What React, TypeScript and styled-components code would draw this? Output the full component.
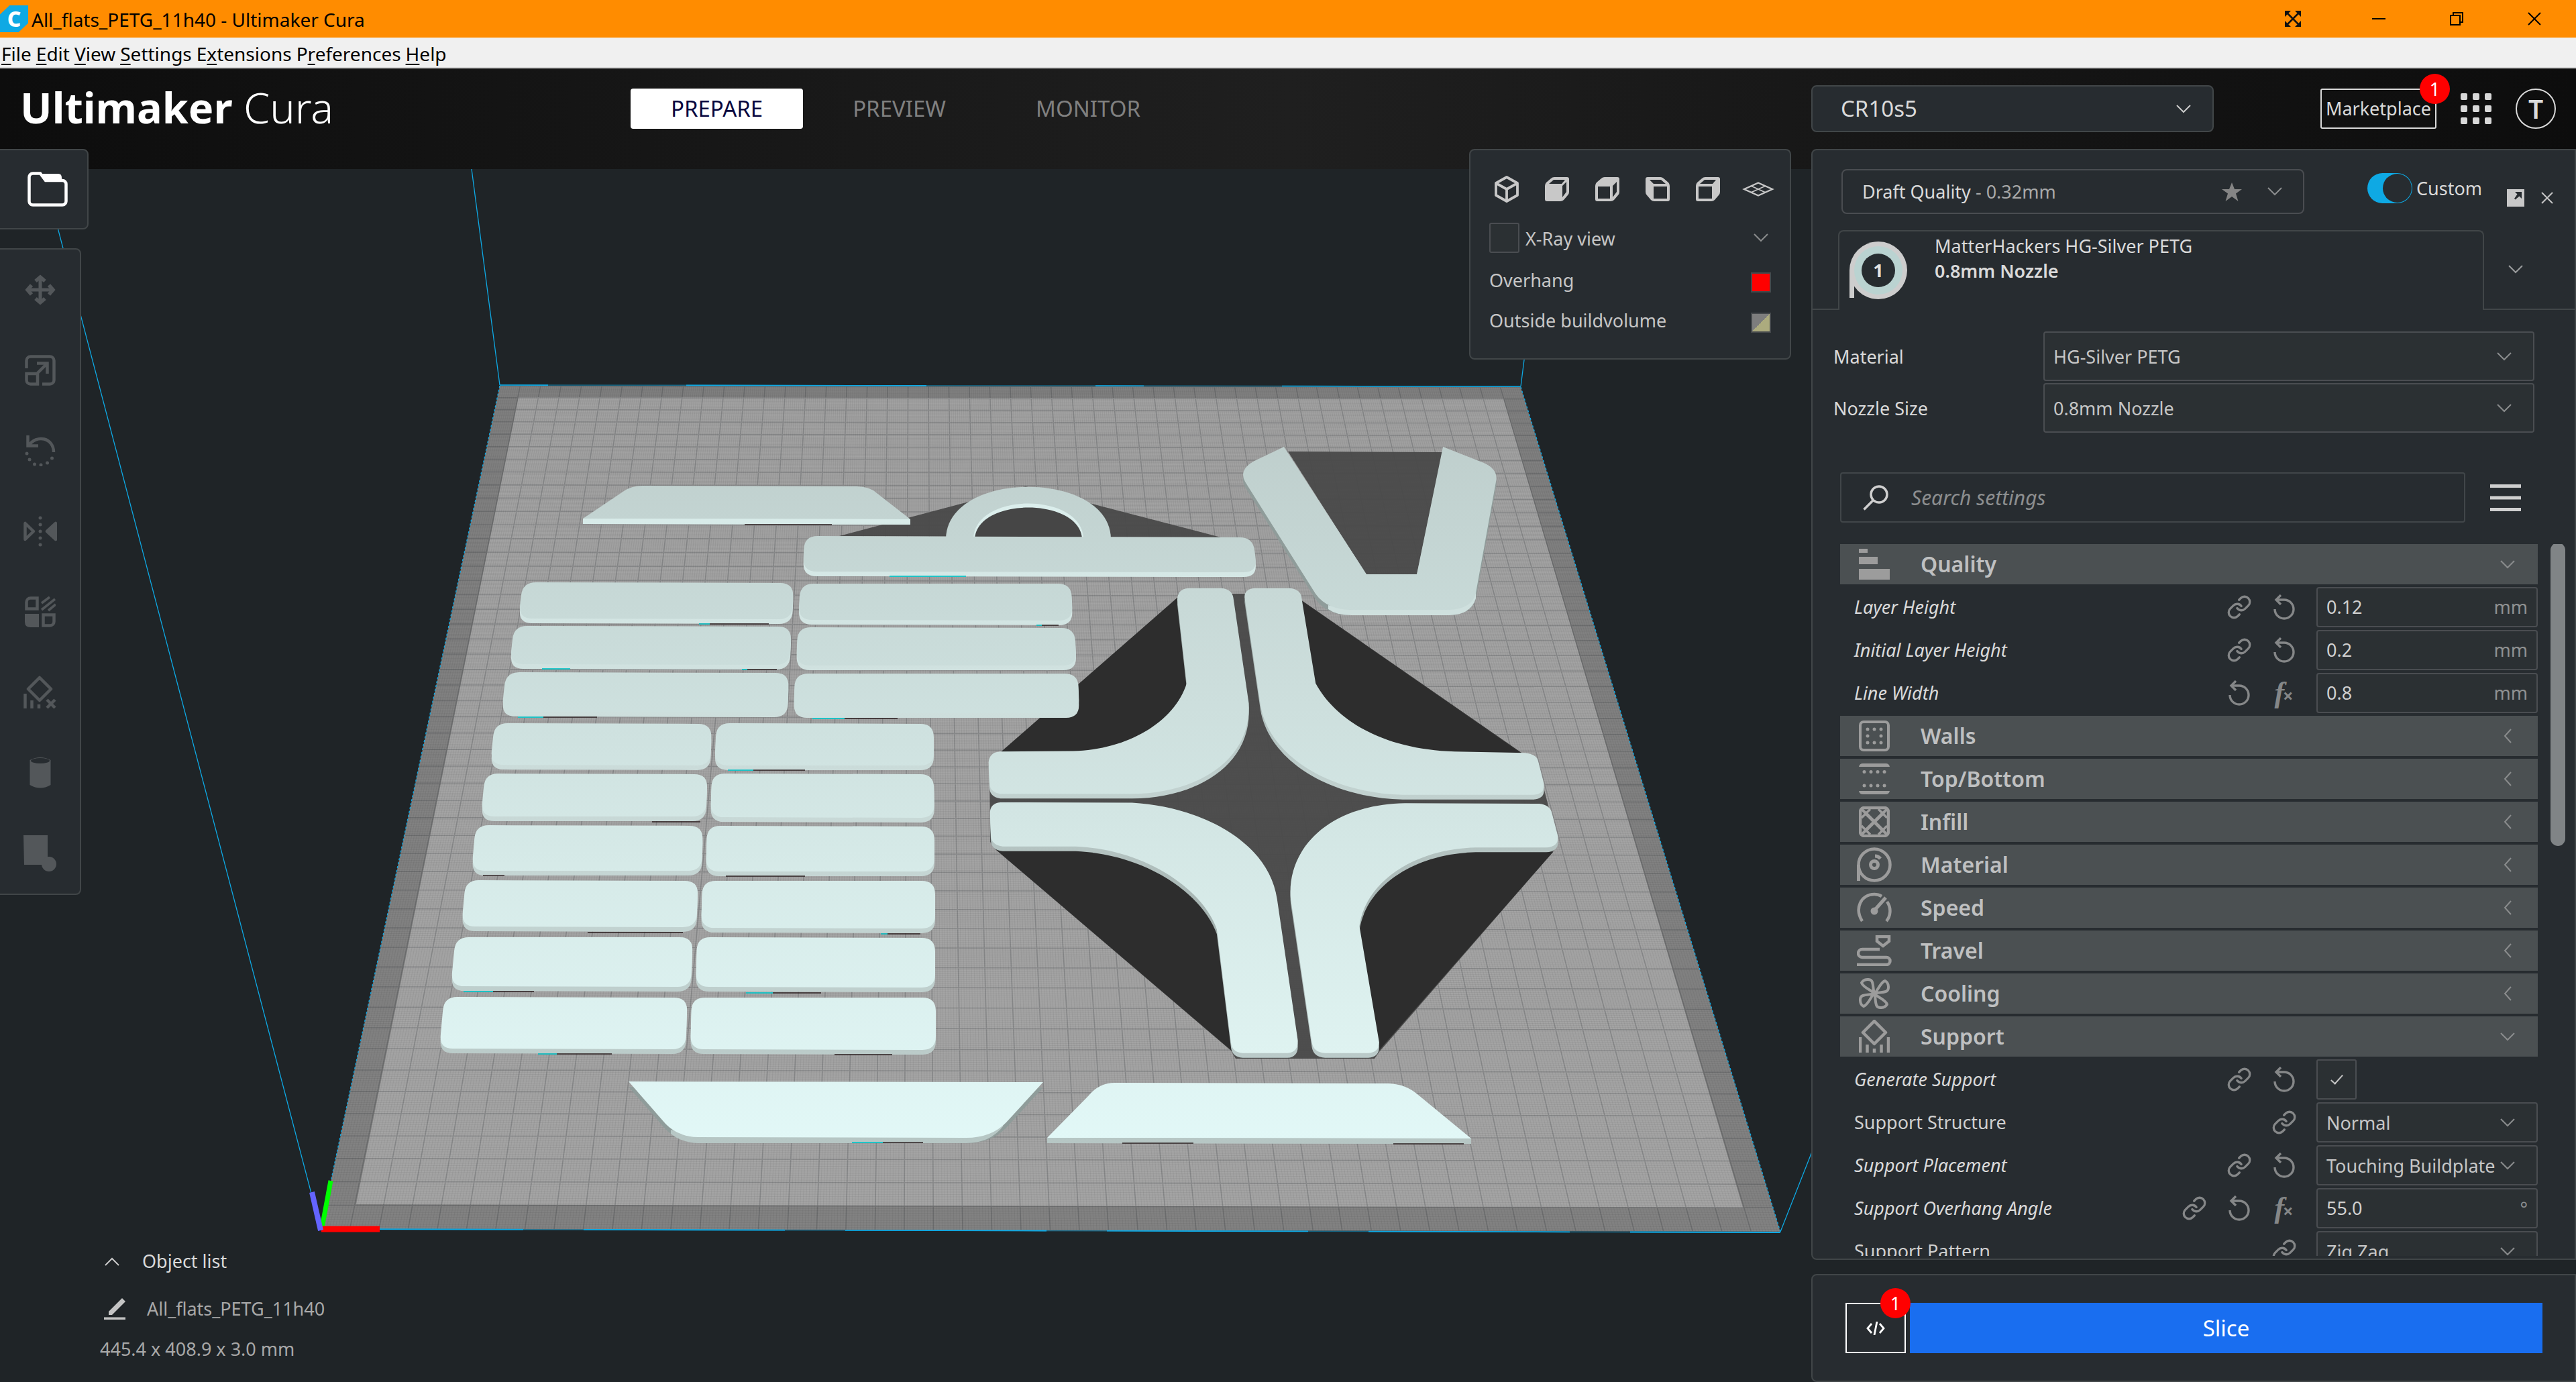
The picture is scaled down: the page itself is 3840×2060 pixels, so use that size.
import React from "react";
import styled, { createGlobalStyle, css } from "styled-components";
import { Link as LinkIcon } from "lucide-react";

const c = {
  accent: "#ff8c00",
  canvas: "#1f2427",
  panel: "#272c30",
  line: "#414648",
  field: "#2b3033",
  fieldLine: "#4a4d51",
  category: "#4b5052",
  text: "#dadada",
  soft: "#c6c6c6",
  dim: "#8f9192",
  icon: "#c8c8c8",
  blue: "#196ef0",
  cyan: "#0ea9e4",
  alert: "#ff0000",
};

const GlobalStyle = createGlobalStyle`
  *, *::before, *::after { box-sizing: border-box; }
  html, body { margin: 0; padding: 0; background: ${c.canvas}; }
  body { overflow: hidden; }
  body, button, input, select {
    font-family: "Noto Sans", "Open Sans", sans-serif;
    font-size: 27px;
    line-height: 36px;
    color: ${c.text};
  }
  button { padding: 0; border: 0; background: none; cursor: pointer; }
  svg { display: block; flex: none; }
`;

/* ---------- frame ---------- */

const Window = styled.div`
  display: flex;
  flex-direction: column;
  height: 100vh;
`;

const TitleBar = styled.header`
  display: flex;
  align-items: center;
  height: 56px;
  padding-right: 4px;
  background: ${c.accent};
  color: #000;
  font-size: 28px;
`;

const AppBadge = styled.span`
  display: grid;
  place-items: center;
  width: 42px;
  height: 40px;
  margin-right: 5px;
  background: ${c.cyan};
  clip-path: polygon(34% 0, 100% 0, 100% 66%, 66% 100%, 0 100%, 0 34%);
  color: #fff;
  font-size: 32px;
  font-weight: 800;
  line-height: 40px;
`;

const WindowTitle = styled.span`
  flex: 1;
  padding-top: 2px;
`;

const CaptionButton = styled.button<{ $gap?: boolean }>`
  display: grid;
  place-items: center;
  width: 116px;
  height: 54px;
  margin-right: ${(p) => (p.$gap ? "12px" : "0")};
`;

const MenuBar = styled.nav`
  display: flex;
  gap: 7px;
  height: 46px;
  padding: 3px 0 0 2px;
  align-items: center;
  background: #f0f0f0;
  border-bottom: 2px solid #d9d9d9;
`;

const MenuItem = styled.button`
  color: #000;
  font-size: 28px;
  u {
    text-decoration-thickness: 2px;
    text-underline-offset: 4px;
  }
`;

const Main = styled.main`
  position: relative;
  flex: 1;
  min-height: 0;
  display: flex;
  flex-direction: column;
  background: linear-gradient(90deg, #0d0d0d, #1f1f1f 50%, #0d0d0d) 0 0 / 100% 150px no-repeat, ${c.canvas};
`;

const SceneLayer = styled.svg`
  position: absolute;
  inset: 0;
  width: 100%;
  height: 100%;
`;

const columns = css`
  position: relative;
  display: grid;
  grid-template-columns: minmax(0, 45fr) minmax(0, 19fr);
`;

const Header = styled.div`
  ${columns}
  height: 120px;
`;

const HeaderStart = styled.div`
  display: grid;
  grid-template-columns: 1fr auto 1fr;
  align-items: center;
`;

const Brand = styled.h1`
  margin: 0;
  padding: 0 0 4px 30px;
  font-size: 63px;
  line-height: 72px;
  font-weight: 700;
  color: #fff;
  white-space: nowrap;
  span {
    font-weight: 300;
  }
`;

const Stages = styled.div`
  display: flex;
  gap: 14px;
`;

const StageButton = styled.button<{ $active?: boolean }>`
  height: 60px;
  padding: 0 60px;
  border-radius: 4px;
  font-size: 33px;
  background: ${(p) => (p.$active ? "#fff" : "transparent")};
  color: ${(p) => (p.$active ? "#08073f" : "#808080")};
`;

const HeaderEnd = styled.div`
  display: flex;
  align-items: center;
  gap: 36px;
  padding-right: 30px;
`;

const Badge = styled.span`
  position: absolute;
  top: -24px;
  right: -22px;
  width: 45px;
  height: 45px;
  border-radius: 50%;
  background: ${c.alert};
  color: #fff;
  font-size: 27px;
  line-height: 45px;
  text-align: center;
`;

const MarketButton = styled.button`
  position: relative;
  height: 60px;
  margin-left: auto;
  padding: 0 6px;
  border: 2px solid #dadada;
  border-radius: 3px;
`;

const Avatar = styled.button`
  width: 60px;
  height: 60px;
  border: 2px solid #dadada;
  border-radius: 50%;
  font-size: 39px;
  font-weight: 600;
`;

/* ---------- shared controls ---------- */

const SelectWrap = styled.div`
  position: relative;
  display: flex;
  min-width: 0;
  svg {
    position: absolute;
    top: calc(50% - 6px);
    right: 34px;
    pointer-events: none;
  }
`;

const SelectBox = styled.select<{ $h: number; $big?: boolean }>`
  appearance: none;
  width: 100%;
  height: ${(p) => p.$h}px;
  padding: 2px 13px 0;
  border: 2px solid ${c.fieldLine};
  border-radius: 4px;
  background: ${c.field};
  color: ${c.soft};
  ${(p) =>
    p.$big &&
    css`
      padding: 0 42px;
      border-color: ${c.line};
      border-radius: 8px;
      background: ${c.panel};
      color: ${c.text};
      font-size: 33px;
    `}
`;

const MachineSelect = styled(SelectWrap)`
  flex: 0 1 600px;
`;

const TickBox = styled.input<{ $size: number }>`
  appearance: none;
  display: grid;
  place-items: center;
  width: ${(p) => p.$size}px;
  height: ${(p) => p.$size}px;
  margin: 0;
  border: 2px solid ${c.fieldLine};
  border-radius: 3px;
  background: ${c.field};
  &:checked::before {
    content: "";
    width: 9px;
    height: 18px;
    border: solid ${c.soft};
    border-width: 0 2px 2px 0;
    transform: translateY(-2px) rotate(42deg);
  }
`;

/* ---------- workspace ---------- */

const Workspace = styled.div`
  ${columns}
  flex: 1;
  min-height: 0;
`;

const Viewport = styled.section`
  display: flex;
  justify-content: space-between;
  align-items: flex-start;
  padding-right: 30px;
  height: 100%;
`;

const ToolColumn = styled.div`
  display: flex;
  flex-direction: column;
  align-items: flex-start;
  height: 100%;
  padding-bottom: 31px;
`;

const edge = css`
  background: ${c.panel};
  border: 2px solid ${c.line};
`;

const OpenButton = styled.button`
  ${edge}
  display: grid;
  place-items: center;
  width: 134px;
  height: 120px;
  margin-left: -2px;
  padding-left: 12px;
  border-radius: 0 8px 8px 0;
`;

const ToolBar = styled.div`
  ${edge}
  width: 123px;
  margin: 28px 0 auto -2px;
  border-radius: 0 8px 8px 0;
`;

const ToolButton = styled.button`
  display: grid;
  place-items: center;
  width: 100%;
  height: 120px;
  color: #53575a;
`;

const ObjectPanel = styled.div`
  display: flex;
  flex-direction: column;
  align-items: flex-start;
  gap: 24px;
  padding-left: 149px;
  color: #a8a8a8;
`;

const ObjectToggle = styled.button`
  display: flex;
  align-items: center;
  gap: 34px;
  margin-bottom: 11px;
  padding-left: 7px;
`;

const ObjectName = styled.div`
  display: flex;
  align-items: center;
  gap: 32px;
  padding-left: 6px;
`;

const ViewPanel = styled.div`
  ${edge}
  width: 480px;
  padding: 38px 28px;
  border-radius: 8px;
  color: ${c.soft};
`;

const ViewIcons = styled.div`
  display: flex;
  margin: 0 -18px 30px -12px;
`;

const ViewIconButton = styled.button`
  flex: none;
  display: grid;
  place-items: center;
  width: 75px;
  height: 40px;
  color: ${c.icon};
`;

const XRayRow = styled.div`
  display: flex;
  align-items: center;
  gap: 9px;
  padding-right: 4px;
  margin-bottom: 29px;
  label {
    padding-top: 2px;
  }
  button {
    margin-left: auto;
  }
`;

const LegendRow = styled.div`
  display: flex;
  justify-content: space-between;
  align-items: flex-start;
  height: 30px;
  line-height: 24px;
  & + & {
    margin-top: 30px;
  }
`;

const Swatch = styled.span<{ $fill: string }>`
  width: 30px;
  height: 30px;
  border: 2px solid #45494c;
  background: ${(p) => p.$fill};
`;

/* ---------- settings panel ---------- */

const SideColumn = styled.aside`
  display: flex;
  flex-direction: column;
  gap: 21px;
  min-height: 0;
  height: 100%;
`;

const SettingsPanel = styled.section`
  ${edge}
  flex: 1;
  min-height: 0;
  display: flex;
  flex-direction: column;
  padding: 28px 0 4px;
  border-radius: 8px 0 0 8px;
`;

const ProfileRow = styled.div`
  display: flex;
  align-items: flex-start;
  height: 67px;
  padding: 0 32px 0 43px;
`;

const ProfileButton = styled.button`
  display: flex;
  align-items: center;
  width: 690px;
  height: 67px;
  padding: 0 31px 0 29px;
  border: 2px solid ${c.fieldLine};
  border-radius: 8px;
  text-align: left;
  span {
    flex: 1;
    white-space: pre;
  }
  em {
    font-style: normal;
    color: #a9a9a9;
  }
  svg + svg {
    margin-left: 38px;
  }
`;

const CustomToggle = styled.label`
  display: flex;
  align-items: center;
  gap: 6px;
  margin: 6px 37px 0 auto;
`;

const Switch = styled.input`
  appearance: none;
  width: 67px;
  height: 45px;
  margin: 0;
  padding: 1px;
  border-radius: 23px;
  background: ${c.cyan};
  &::before {
    content: "";
    display: block;
    width: 43px;
    height: 43px;
    margin-left: auto;
    border-radius: 50%;
    background: ${c.panel};
  }
`;

const PanelButton = styled.button`
  display: grid;
  place-items: center;
  height: 26px;
  margin-top: 30px;
  & + & {
    margin-left: 25px;
  }
`;

const ExtruderTabs = styled.div`
  display: flex;
  height: 119px;
  margin-top: 24px;
  &::before {
    content: "";
    width: 38px;
    border-bottom: 2px solid ${c.line};
  }
`;

const ExtruderTab = styled.button`
  flex: 1;
  display: flex;
  gap: 40px;
  padding: 3px 0 0 14px;
  border: 2px solid ${c.line};
  border-bottom: 0;
  border-radius: 8px 8px 0 0;
  text-align: left;
  line-height: 37px;
  svg {
    margin-top: 10px;
  }
  strong {
    display: block;
    font-weight: 600;
  }
`;

const TabsMore = styled.button`
  width: 135px;
  padding-left: 36px;
  border-bottom: 2px solid ${c.line};
`;

const HardwareGrid = styled.div`
  display: grid;
  grid-template-columns: 313px 1fr;
  align-items: center;
  gap: 3px 0;
  margin: 32px 60px 59px 31px;
  label {
    padding-top: 2px;
  }
`;

const SearchRow = styled.div`
  display: flex;
  align-items: center;
  gap: 37px;
  margin: 0 80px 32px 41px;
`;

const SearchField = styled.label`
  flex: 1;
  display: flex;
  align-items: center;
  gap: 34px;
  height: 75px;
  padding: 0 32px;
  border: 2px solid #414649;
  border-radius: 4px;
  input {
    flex: 1;
    border: 0;
    padding: 0;
    outline: 0;
    background: none;
    font-size: 30px;
    font-style: italic;
  }
  input::placeholder {
    color: #8c8e8f;
    opacity: 1;
  }
`;

const ListArea = styled.div`
  display: flex;
  gap: 19px;
  flex: 1;
  min-height: 0;
  margin-left: 41px;
  padding-right: 14px;
  overflow: hidden;
`;

const SettingsList = styled.div`
  flex: 1;
  display: flex;
  flex-direction: column;
  gap: 4px;
`;

const ScrollThumb = styled.div`
  width: 22px;
  height: 452px;
  margin-top: -2px;
  border-radius: 11px;
  background: #808486;
`;

const Category = styled.button`
  flex: none;
  display: flex;
  align-items: center;
  height: 60px;
  padding-right: 34px;
  background: ${c.category};
  color: #bfc0c1;
  font-size: 32px;
  font-weight: 600;
  line-height: 44px;
`;

const CategoryIcon = styled.span`
  display: grid;
  place-items: center;
  width: 102px;
  margin-right: 18px;
  color: #9c9c9c;
`;

const CategoryMark = styled.span`
  display: grid;
  place-items: center;
  width: 22px;
  margin-left: auto;
`;

const SettingRow = styled.div`
  flex: none;
  display: flex;
  align-items: center;
  height: 60px;
  padding-left: 21px;
`;

const SettingLabel = styled.label<{ $changed?: boolean }>`
  flex: 1;
  font-style: ${(p) => (p.$changed ? "italic" : "normal")};
  color: ${(p) => (p.$changed ? c.text : "#cfcfcf")};
`;

const RowAction = styled.button`
  display: grid;
  place-items: center;
  width: 67px;
  height: 60px;
  color: #858788;
`;

const Fx = styled.span`
  display: flex;
  align-items: baseline;
  font: italic 700 44px/36px "Liberation Serif", serif;
  color: #858788;
  sub {
    margin-left: -2px;
    font: 700 27px/20px "Noto Sans", sans-serif;
  }
`;

const Control = styled.div`
  width: 330px;
  margin-left: 15px;
`;

const NumberField = styled.div`
  display: flex;
  align-items: center;
  height: 60px;
  padding: 0 13px;
  border: 2px solid ${c.fieldLine};
  border-radius: 4px;
  background: ${c.field};
  color: ${c.dim};
  input {
    flex: 1;
    min-width: 0;
    padding: 0;
    border: 0;
    outline: 0;
    background: none;
    color: #d0d0d0;
  }
`;

const ActionPanel = styled.section`
  ${edge}
  display: flex;
  gap: 6px;
  padding: 41px 48px 41px 49px;
  border-radius: 8px 0 0 8px;
`;

const ScriptButton = styled.button`
  position: relative;
  display: grid;
  place-items: center;
  width: 90px;
  height: 75px;
  border: 2px solid #fff;
  & > ${Badge} {
    right: -9px;
  }
`;

const SliceButton = styled.button`
  flex: 1;
  height: 75px;
  background: ${c.blue};
  color: #fff;
  font-size: 33px;
`;

/* ---------- icons ---------- */

const Chevron = ({ dir = "down", color = "#8a8c8d" }: { dir?: "down" | "up" | "left"; color?: string }) =>
  dir === "left" ? (
    <svg width="12" height="22" viewBox="0 0 12 22" fill="none" stroke={color} strokeWidth="2">
      <path d="M11 1L2 11l9 10" />
    </svg>
  ) : (
    <svg width="22" height="13" viewBox="0 0 22 13" fill="none" stroke={color} strokeWidth="2">
      <path d={dir === "down" ? "M1 1l10 10L21 1" : "M1 12L11 2l10 10"} />
    </svg>
  );

const ResetIcon = () => (
  <svg width="34" height="38" viewBox="0 0 34 38" fill="none" stroke="currentColor" strokeWidth="3.4">
    <path d="M3 22a14 14 0 1 0 14-14H6" />
    <path d="M12 1L5 8l7 7" />
  </svg>
);

const rightShell = "M0 13Q0 10 2 8L9 2Q11 0 14 0H33Q36 0 36 3V22Q36 25 34 27L28 34Q26 36 23 36H3Q0 36 0 33Z";
const leftShell = "M36 13Q36 10 34 8L27 2Q25 0 22 0H3Q0 0 0 3V22Q0 25 2 27L8 34Q10 36 13 36H33Q36 36 36 33Z";
const topHole = "M6 10L13 4H30L25 10Z";
const sideHole = "M26 13L32 7V22L26 30Z";

const Cube = ({ d }: { d: string }) => (
  <svg width="36" height="36" viewBox="0 0 36 36" fill="currentColor" fillRule="evenodd">
    <path d={d} />
  </svg>
);

const viewIcons: [string, React.ReactNode][] = [
  [
    "3D view",
    <svg width="36" height="40" viewBox="0 0 36 40" fill="none" stroke="currentColor" strokeWidth="3.8" strokeLinejoin="round">
      <path d="M18 2L34 11V29L18 38L2 29V11ZM2 11L18 20L34 11M18 20V38" />
    </svg>,
  ],
  ["Front view", <Cube d={rightShell + topHole + sideHole} />],
  ["Top view", <Cube d={rightShell + sideHole + "M4 14H22V32H4Z"} />],
  ["Left view", <Cube d={leftShell + "M6 4H23L30 10H12Z M12 14H32V32H12Z"} />],
  ["Right view", <Cube d={rightShell + topHole + "M4 14H24V32H4Z"} />],
  [
    "Perspective",
    <svg width="48" height="22" viewBox="0 0 48 22" fill="none" stroke="currentColor" strokeWidth="2.4">
      <path d="M24 1.5L45 11L24 20.5L3 11Z" />
      <path d="M13.5 6.2L34.5 15.8M34.5 6.2L13.5 15.8" strokeWidth="1.8" />
    </svg>,
  ],
];

const Glyph = ({ children, w = 46, h = 46 }: { children: React.ReactNode; w?: number; h?: number }) => (
  <svg width={w} height={h} viewBox={`0 0 ${w} ${h}`} fill="none" stroke="currentColor" strokeWidth="4.5">
    {children}
  </svg>
);

const dots = (pts: number[][], r = 2.5) =>
  pts.map(([x, y]) => <circle key={`${x}-${y}`} cx={x} cy={y} r={r} fill="currentColor" stroke="none" />);

const tools: [string, React.ReactNode][] = [
  [
    "Move",
    <Glyph>
      <path d="M23 4V42M4 23H42" strokeWidth="5" />
      <path d="M16 10L23 4L30 10M16 36L23 42L30 36M10 16L4 23L10 30M36 16L42 23L36 30" strokeWidth="5.5" />
    </Glyph>,
  ],
  [
    "Scale",
    <Glyph>
      <path d="M2.500 20V8.500a6 6 0 0 1 6-6H37.500a6 6 0 0 1 6 6V37.500a6 6 0 0 1-6 6H26" />
      <path d="M2.500 28H19V43.500H8.500a6 6 0 0 1-6-6ZM18 28L33 13M18 12.500H33.500V28" />
    </Glyph>,
  ],
  [
    "Rotate",
    <Glyph>
      <path d="M5 16C18-3 43 4 43 25M4.500 0V15.500H20" />
      {dots([[3, 27], [7, 36], [14.5, 43], [24, 44], [33.5, 41], [40.5, 34]])}
    </Glyph>,
  ],
  [
    "Mirror",
    <Glyph w={50}>
      <path d="M2.500 11V35L15 23Z" strokeLinejoin="round" />
      <path d="M48 11V35L35 23Z" fill="currentColor" strokeLinejoin="round" />
      {dots([[25, 3], [25, 13], [25, 23], [25, 33], [25, 43]])}
    </Glyph>,
  ],
  [
    "Per model settings",
    <Glyph>
      <path d="M2.500 18.500V8.500a6 6 0 0 1 6-6H18.500V18.500ZM27.500 27.500H43.500V37.500a6 6 0 0 1-6 6H27.500Z" />
      <path d="M0 26H21V46H8Q0 46 0 38Z" fill="currentColor" stroke="none" />
      <path d="M25 10L37 1M25 20L45 4M35 21L46 12" strokeWidth="3.6" />
    </Glyph>,
  ],
  [
    "Support blocker",
    <Glyph w={50} h={50}>
      <path d="M24 3L41 20L24 37L7 20Z" strokeLinejoin="round" />
      <path d="M2.500 27V49M12.500 37V49M23 43V49" />
      <path d="M35 36L47 48M47 36L35 48" />
    </Glyph>,
  ],
  [
    "Cylinder",
    <Glyph w={32}>
      <path d="M0.500 4Q16-4 31.500 4V41Q16 50 0.500 41Z" fill="currentColor" stroke="none" />
      <ellipse cx="16" cy="5" rx="14" ry="4" fill={c.panel} stroke="none" />
    </Glyph>,
  ],
  [
    "Custom shape",
    <Glyph w={50} h={54}>
      <path d="M0 0H36V44H1Z" fill="currentColor" stroke="none" />
      <circle cx="38" cy="43" r="11" fill="currentColor" stroke="none" />
    </Glyph>,
  ],
];

const icons = {
  quality: (
    <Glyph>
      <path d="M0 0H13V6H0ZM0 12H28V23H0ZM0 30H46V46H0Z" fill="currentColor" stroke="none" />
    </Glyph>
  ),
  walls: (
    <Glyph>
      <rect x="2" y="2" width="42" height="42" rx="5" strokeWidth="4" />
      {dots([[13, 13], [23, 13], [33, 13], [13, 23], [33, 23], [13, 33], [23, 33], [33, 33]])}
    </Glyph>
  ),
  topBottom: (
    <Glyph>
      <path d="M0 5Q1 0 6 0H40Q45 0 46 5ZM0 41Q1 46 6 46H40Q45 46 46 41Z" fill="currentColor" stroke="none" />
      {dots([[8, 12.5], [18, 12.5], [28, 12.5], [38, 12.5], [8, 33], [18, 33], [28, 33], [38, 33]])}
    </Glyph>
  ),
  infill: (
    <Glyph>
      <rect x="2" y="2" width="42" height="42" rx="6" strokeWidth="4.5" />
      <path d="M9 9L37 37M37 9L9 37" strokeWidth="5" />
      <path d="M17 4L4 17M29 4L42 17M4 29L17 42M42 29L29 42" strokeWidth="3.4" />
      <path d="M4 4L13 13M42 4L33 13M4 42L13 33M42 42L33 33" strokeWidth="4" />
    </Glyph>
  ),
  material: (
    <Glyph w={52} h={52}>
      <circle cx="26" cy="26" r="23.500" strokeWidth="4.500" />
      <path d="M2.500 26V50" strokeWidth="5" />
      <circle cx="26" cy="26" r="5.500" strokeWidth="5" />
      <path d="M27 13Q32 13 35 17" strokeWidth="5" />
    </Glyph>
  ),
  speed: (
    <Glyph w={52} h={46}>
      <path d="M8 43C-4 24 6 3 26 3Q32 3 37 6M45 14C52 24 50 36 44 43" strokeWidth="4.500" />
      <path d="M27 26L43 8" strokeWidth="5" />
      <circle cx="26" cy="28" r="5.500" fill="currentColor" stroke="none" />
    </Glyph>
  ),
  travel: (
    <Glyph w={52} h={46}>
      <path d="M30 2H48V9L39 16L30 9Z" strokeWidth="4.500" />
      <path d="M34 21H8a6 6 0 0 0 0 12H44a5.500 5.500 0 0 1 0 11H0" strokeWidth="4.500" />
    </Glyph>
  ),
  cooling: (
    <Glyph>
      {[0, 90, 180, 270].map((turn) => (
        <path
          key={turn}
          d="M23 23C21 19 6 14 4 7C7 1 18 0 20 6C22 12 21 18 23 23Z"
          strokeWidth="4"
          strokeLinejoin="round"
          transform={`rotate(${turn} 23 23)`}
        />
      ))}
    </Glyph>
  ),
  support: (
    <Glyph w={46} h={50}>
      <path d="M23 2L40 19L23 36L6 19Z" strokeWidth="4.500" strokeLinejoin="round" />
      <path d="M2 26V49M12.500 37V49M23 43V49M33.500 37V49M44 26V49" strokeWidth="4.500" />
    </Glyph>
  ),
};

/* ---------- build plate scene ---------- */

type Pt = [number, number];
const plate: Pt[] = [[745, 575], [2267, 577], [2654, 1836], [478, 1832]];

function projector([p0, p1, p2, p3]: Pt[]) {
  const sx = p0[0] - p1[0] + p2[0] - p3[0];
  const sy = p0[1] - p1[1] + p2[1] - p3[1];
  const dx1 = p1[0] - p2[0], dx2 = p3[0] - p2[0];
  const dy1 = p1[1] - p2[1], dy2 = p3[1] - p2[1];
  const det = dx1 * dy2 - dx2 * dy1;
  const g = (sx * dy2 - dx2 * sy) / det;
  const h = (dx1 * sy - sx * dy1) / det;
  const a = p1[0] - p0[0] + g * p1[0], b = p3[0] - p0[0] + h * p3[0];
  const d = p1[1] - p0[1] + g * p1[1], e = p3[1] - p0[1] + h * p3[1];
  return (u: number, v: number): Pt => {
    const w = g * u + h * v + 1;
    return [(a * u + b * v + p0[0]) / w, (d * u + e * v + p0[1]) / w];
  };
}

const project = projector(plate);

function gridPath(cells: number, skip: number) {
  let out = "";
  for (let i = 0; i <= cells; i++) {
    if (skip && i % skip === 0) continue;
    const t = i / cells;
    const seg = [project(t, 0), project(t, 1), project(0, t), project(1, t)].map((p) => p.map((n) => n.toFixed(1)).join(" "));
    out += `M${seg[0]}L${seg[1]}M${seg[2]}L${seg[3]}`;
  }
  return out;
}

const majorGrid = gridPath(50, 0);
const minorGrid = gridPath(500, 10);

function rounded(pts: Pt[], r: number) {
  return (
    pts
      .map((p, i) => {
        const prev = pts[(i + pts.length - 1) % pts.length];
        const next = pts[(i + 1) % pts.length];
        const toward = (q: Pt) => {
          const len = Math.hypot(q[0] - p[0], q[1] - p[1]);
          return `${(p[0] + ((q[0] - p[0]) * r) / len).toFixed(1)} ${(p[1] + ((q[1] - p[1]) * r) / len).toFixed(1)}`;
        };
        return `${i ? "L" : "M"}${toward(prev)}Q${p[0]} ${p[1]} ${toward(next)}`;
      })
      .join("") + "Z"
  );
}

const slabs: Pt[][] = [
  [[779, 868], [1183, 869], [1181, 923], [773, 922]],
  [[1193, 870], [1597, 870], [1599, 925], [1190, 924]],
  [[766, 933], [1180, 934], [1177, 991], [760, 990]],
  [[1189, 935], [1602, 936], [1605, 992], [1187, 992]],
  [[754, 1002], [1176, 1003], [1174, 1062], [748, 1061]],
  [[1185, 1004], [1607, 1004], [1609, 1063], [1183, 1063]],
  [[737, 1078], [1061, 1079], [1059, 1141], [731, 1140]],
  [[1068, 1078], [1392, 1079], [1392, 1141], [1065, 1141]],
  [[723, 1153], [1055, 1154], [1052, 1217], [717, 1217]],
  [[1061, 1153], [1392, 1154], [1393, 1219], [1059, 1218]],
  [[709, 1230], [1048, 1231], [1046, 1298], [703, 1298]],
  [[1054, 1231], [1393, 1232], [1393, 1299], [1052, 1299]],
  [[694, 1312], [1041, 1313], [1038, 1382], [688, 1381]],
  [[1047, 1313], [1394, 1313], [1394, 1384], [1045, 1383]],
  [[679, 1397], [1033, 1397], [1030, 1471], [672, 1470]],
  [[1039, 1397], [1394, 1398], [1394, 1472], [1037, 1471]],
  [[662, 1486], [1025, 1487], [1022, 1564], [655, 1563]],
  [[1031, 1487], [1395, 1487], [1395, 1565], [1029, 1564]],
  [[1199, 799], [1868, 801], [1874, 853], [1197, 852]],
];

const plainParts = [
  "M869 773L930 732Q942 724 958 724L1277 725Q1296 725 1307 735L1357 774Z",
  "M937 1612L1555 1613L1500 1673Q1478 1696 1440 1696L1040 1695Q1010 1694 992 1675Z",
  "M1561 1696L1622 1634Q1638 1614 1662 1614L2070 1615Q2096 1616 2114 1632L2193 1697Z",
  "M1914 666L1870 687Q1846 700 1856 718L1961 885Q1978 909 2015 909L2160 909Q2194 908 2200 884L2230 718Q2234 700 2212 690L2151 666L2112 856L2037 856Z",
];

/* Curved brackets share one local frame, scaled into the scene. */
const brackets = [
  "M530 480L600 480Q622 482 625 500L658 725C664 850 540 917 410 917L130 917Q108 914 107 895L105 850Q107 828 130 827L285 826C400 823 500 765 526 682L506 505Q506 482 530 480Z",
  "M670 480L745 480Q768 482 770 500L800 682C845 765 950 823 1095 827L1245 830Q1270 833 1273 848L1285 895Q1288 918 1262 919L985 919C820 915 700 830 683 730L649 500Q648 482 670 480Z",
  "M130 935L410 936C560 945 700 1020 718 1140L762 1440Q764 1466 740 1468L645 1468Q622 1466 620 1445L590 1205C560 1120 440 1035 290 1029L135 1029Q112 1026 110 1008L108 958Q108 937 130 935Z",
  "M990 937L1275 938Q1298 940 1302 958L1315 1008Q1316 1030 1290 1031L1140 1031C1000 1035 905 1110 893 1198L935 1445Q935 1466 912 1468L820 1468Q795 1466 792 1445L747 1140C738 1040 820 940 990 937Z",
];
const bracketFrame = "translate(1400 540) scale(0.7015)";

const contactMarks: [number, number, number, number][] = [
  [1042, 930, 1146, 16], [1110, 782, 1240, 0], [1326, 859, 1440, 114],
  [1545, 932, 1578, 8], [808, 997, 850, 42], [1106, 998, 1158, 8],
  [772, 1069, 890, 38], [1211, 1071, 1338, 48], [1085, 1148, 1200, 38],
  [972, 1225, 1044, 0], [720, 1305, 752, 0], [1082, 1306, 1200, 0],
  [876, 1390, 1018, 0], [1313, 1392, 1372, 10], [691, 1478, 796, 44],
  [1112, 1480, 1224, 40], [802, 1571, 912, 28], [1244, 1572, 1330, 0],
  [1270, 1703, 1376, 46], [1673, 1704, 1779, 0], [2077, 1705, 2182, 0],
];

const points = (pts: Pt[]) => pts.map((p) => p.join(",")).join(" ");

const Scene = () => (
  <SceneLayer viewBox="0 102 3840 1958" preserveAspectRatio="xMidYMid slice" role="img" aria-label="Build plate">
    <defs>
      <linearGradient id="top" gradientUnits="userSpaceOnUse" x1="0" y1="660" x2="0" y2="1710">
        <stop offset="0" stopColor="#bfcfcd" />
        <stop offset="0.25" stopColor="#c8dad8" />
        <stop offset="0.6" stopColor="#d6eae8" />
        <stop offset="1" stopColor="#e2f8f7" />
      </linearGradient>
      <linearGradient id="side" gradientUnits="userSpaceOnUse" x1="0" y1="660" x2="0" y2="1710">
        <stop offset="0" stopColor="#dcf0ee" />
        <stop offset="0.35" stopColor="#cfe0de" />
        <stop offset="1" stopColor="#b6c6c4" />
      </linearGradient>
      <linearGradient id="bracketTop" gradientUnits="userSpaceOnUse" x1="0" y1="480" x2="0" y2="1480">
        <stop offset="0" stopColor="#c7d8d6" />
        <stop offset="0.5" stopColor="#d3e6e4" />
        <stop offset="1" stopColor="#dff3f1" />
      </linearGradient>
      <linearGradient id="bracketSide" gradientUnits="userSpaceOnUse" x1="0" y1="480" x2="0" y2="1480">
        <stop offset="0" stopColor="#97a5a3" />
        <stop offset="0.42" stopColor="#c2d2d0" />
        <stop offset="0.7" stopColor="#a3b1af" />
        <stop offset="1" stopColor="#bccccb" />
      </linearGradient>
    </defs>

    <g stroke={c.cyan} strokeWidth="1.300" fill="none">
      <path d="M703 252L745 574M2308 252L2267 576M63 252L478 1832M3000 960L2654 1836" />
    </g>

    <polygon points={points(plate)} fill="#828282" />
    <polygon points="773,592 2241,594 2598,1800 531,1795" fill="#a4a4a4" />
    <path d={minorGrid} stroke="#000" strokeOpacity="0.055" strokeWidth="1" fill="none" />
    <path d={majorGrid} stroke="#1c2024" strokeOpacity="0.22" strokeWidth="1.600" fill="none" />

    <g fill="none" stroke={c.cyan}>
      <path d="M745 574L2267 576M480 1832L2654 1837" strokeWidth="1.500" strokeOpacity="0.500" />
      <path d="M745 574L2267 576" strokeWidth="1.600" strokeDasharray="72 206 358 252" />
      <path d="M480 1832L2654 1837" strokeWidth="1.800" strokeDasharray="300 90" />
      <path d="M745 575L478 1832M2267 577L2654 1836" strokeWidth="1.400" strokeDasharray="3 3" />
    </g>

    <path d="M1251 799L1440 749L1529 725L1624 750L1820 801Z" fill="#484848" fillOpacity="0.940" />
    <path d="M1920 673L2150 674L2112 857L2037 857Z" fill="#484848" fillOpacity="0.940" />
    <polygon
      points="1493,1120 1755,891 1825,885 1925,885 1941,896 2266,1122 2300,1170 2322,1255 2315,1270 2056,1568 2049,1578 1842,1578 1835,1566 1484,1266 1476,1255 1475,1136"
      fill="#484848"
      fillOpacity="0.940"
    />
    <g fill="#2a2a2a" fillOpacity="0.900">
      <path d="M1493 1120L1755 891L1778 1020Q1740 1110 1600 1128Z" />
      <path d="M1939 894L2268 1122L2160 1130Q2010 1110 1952 1020Z" />
      <path d="M1484 1266L1600 1255Q1760 1280 1822 1385L1838 1568Z" />
      <path d="M2315 1270L2200 1255Q2050 1280 2020 1380L2052 1570Z" />
    </g>

    <path d="M1410 803C1412 700 1654 700 1656 803Z" fill="url(#top)" />
    <path d="M1451 803C1453 733 1613 733 1615 803Z" fill="#dbeeec" />
    <path d="M1453 803C1457 741 1609 741 1613 803Z" fill="#464646" />

    {slabs.map((s, i) => (
      <g key={i}>
        <path d={rounded(s.map(([x, y]) => [x, y + 7] as Pt), 20)} fill="url(#side)" />
        <path d={rounded(s, 20)} fill="url(#top)" />
      </g>
    ))}

    {plainParts.map((d, i) => (
      <g key={i}>
        <path d={d} fill={i === 1 || i === 3 ? "#8f9c9a" : "url(#side)"} transform="translate(0 8)" />
        {i === 1 && <path d="M1000 1684L1040 1695H1440L1496 1678Q1476 1704 1440 1704H1040Q1016 1703 1000 1690Z" fill="url(#side)" />}
        {i === 3 && <path d="M1980 902L2015 909H2160L2200 884V892Q2192 917 2160 917H2015Q1992 917 1980 908Z" fill="#cfe0de" />}
        <path d={d} fill="url(#top)" />
      </g>
    ))}
    <path d="M869 773L1357 774V782L869 781ZM1561 1696L2193 1697V1705L1561 1704Z" fill="url(#side)" />

    <g transform={bracketFrame}>
      {brackets.map((d, i) => (
        <g key={i}>
          <path d={d} fill="url(#bracketSide)" transform="translate(0 10)" />
          <path d={d} fill="url(#bracketTop)" />
        </g>
      ))}
    </g>

    {contactMarks.map(([x1, y, x2, cyan]) => (
      <g key={`${x1}-${y}`} strokeWidth="1.400">
        <path d={`M${x1} ${y}H${x2}`} stroke="#2b1f20" />
        {cyan > 0 && <path d={`M${x1} ${y}h${cyan}`} stroke="#11eef2" />}
      </g>
    ))}

    <path d="M480 1830L493 1760" stroke="#00ff00" strokeWidth="7" />
    <path d="M479 1832H566" stroke="#ff0000" strokeWidth="9" />
    <path d="M478 1834L465 1777" stroke="#6464ff" strokeWidth="8" />
  </SceneLayer>
);

/* ---------- content ---------- */

const menus: [string, string, string][] = [
  ["", "F", "ile"],
  ["", "E", "dit"],
  ["", "V", "iew"],
  ["", "S", "ettings"],
  ["E", "x", "tensions"],
  ["P", "r", "eferences"],
  ["", "H", "elp"],
];

type Mark = "link" | "reset" | "fx";
type SettingData = {
  name: string;
  marks: Mark[];
  changed?: boolean;
  value?: string;
  unit?: string;
  option?: string;
  tick?: boolean;
};

const groups: { title: string; icon: React.ReactNode; settings?: SettingData[] }[] = [
  {
    title: "Quality",
    icon: icons.quality,
    settings: [
      { name: "Layer Height", marks: ["link", "reset"], changed: true, value: "0.12", unit: "mm" },
      { name: "Initial Layer Height", marks: ["link", "reset"], changed: true, value: "0.2", unit: "mm" },
      { name: "Line Width", marks: ["reset", "fx"], changed: true, value: "0.8", unit: "mm" },
    ],
  },
  { title: "Walls", icon: icons.walls },
  { title: "Top/Bottom", icon: icons.topBottom },
  { title: "Infill", icon: icons.infill },
  { title: "Material", icon: icons.material },
  { title: "Speed", icon: icons.speed },
  { title: "Travel", icon: icons.travel },
  { title: "Cooling", icon: icons.cooling },
  {
    title: "Support",
    icon: icons.support,
    settings: [
      { name: "Generate Support", marks: ["link", "reset"], changed: true, tick: true },
      { name: "Support Structure", marks: ["link"], option: "Normal" },
      { name: "Support Placement", marks: ["link", "reset"], changed: true, option: "Touching Buildplate" },
      { name: "Support Overhang Angle", marks: ["link", "reset", "fx"], changed: true, value: "55.0", unit: "°" },
      { name: "Support Pattern", marks: ["link"], option: "Zig Zag" },
    ],
  },
];

const markTitle = { link: "Linked to all extruders", reset: "Restore profile value", fx: "Restore calculated value" };

const MarkIcon = ({ kind }: { kind: Mark }) => {
  if (kind === "link") return <LinkIcon size={38} strokeWidth={2.1} />;
  if (kind === "reset") return <ResetIcon />;
  return (
    <Fx>
      f<sub>×</sub>
    </Fx>
  );
};

const Setting = ({ s }: { s: SettingData }) => {
  const id = s.name.toLowerCase().replace(/ /g, "-");
  return (
    <SettingRow>
      <SettingLabel htmlFor={id} $changed={s.changed}>
        {s.name}
      </SettingLabel>
      {s.marks.map((m) => (
        <RowAction key={m} aria-label={markTitle[m]}>
          <MarkIcon kind={m} />
        </RowAction>
      ))}
      <Control>
        {s.tick && <TickBox id={id} type="checkbox" $size={60} defaultChecked />}
        {s.option && (
          <SelectWrap>
            <SelectBox id={id} $h={60}>
              <option>{s.option}</option>
            </SelectBox>
            <Chevron />
          </SelectWrap>
        )}
        {s.value && (
          <NumberField>
            <input id={id} defaultValue={s.value} />
            {s.unit}
          </NumberField>
        )}
      </Control>
    </SettingRow>
  );
};

export default function App() {
  return (
    <Window>
      <GlobalStyle />
      <TitleBar>
        <AppBadge aria-hidden>C</AppBadge>
        <WindowTitle>All_flats_PETG_11h40 - Ultimaker Cura</WindowTitle>
        <CaptionButton $gap aria-label="Full screen">
          <svg width="26" height="26" viewBox="0 0 26 26" stroke="#111" strokeWidth="2.500">
            <path d="M4 4L22 22M22 4L4 22" />
            <path d="M1 1H10L1 10ZM25 1V10L16 1ZM1 25V16L10 25ZM25 25H16L25 16Z" fill="#111" stroke="none" />
          </svg>
        </CaptionButton>
        <CaptionButton aria-label="Minimize">
          <svg width="20" height="2" viewBox="0 0 20 2">
            <path d="M0 1H20" stroke="#000" strokeWidth="2" />
          </svg>
        </CaptionButton>
        <CaptionButton aria-label="Restore">
          <svg width="20" height="20" viewBox="0 0 20 20" fill="none" stroke="#000" strokeWidth="2">
            <path d="M1 5H15V19H1ZM5 5V1H19V15H15" />
          </svg>
        </CaptionButton>
        <CaptionButton aria-label="Close">
          <svg width="20" height="20" viewBox="0 0 20 20" stroke="#000" strokeWidth="2">
            <path d="M1 1L19 19M19 1L1 19" />
          </svg>
        </CaptionButton>
      </TitleBar>

      <MenuBar>
        {menus.map(([before, key, after]) => (
          <MenuItem key={before + key + after}>
            {before}
            <u>{key}</u>
            {after}
          </MenuItem>
        ))}
      </MenuBar>

      <Main>
        <Scene />
        <Header>
          <HeaderStart>
            <Brand>
              Ultimaker <span>Cura</span>
            </Brand>
            <Stages>
              <StageButton $active>PREPARE</StageButton>
              <StageButton>PREVIEW</StageButton>
              <StageButton>MONITOR</StageButton>
            </Stages>
          </HeaderStart>
          <HeaderEnd>
            <MachineSelect>
              <SelectBox $h={70} $big aria-label="Printer">
                <option>CR10s5</option>
              </SelectBox>
              <Chevron color={c.icon} />
            </MachineSelect>
            <MarketButton>
              Marketplace
              <Badge>1</Badge>
            </MarketButton>
            <button aria-label="Applications">
              <svg width="46" height="46" viewBox="0 0 46 46" fill="#d8d8d8">
                {[0, 18, 36].map((y) => [0, 18, 36].map((x) => <rect key={`${x}-${y}`} x={x} y={y} width="10" height="10" rx="2" />))}
              </svg>
            </button>
            <Avatar>T</Avatar>
          </HeaderEnd>
        </Header>

        <Workspace>
          <Viewport>
            <ToolColumn>
              <OpenButton aria-label="Open file">
                <svg width="60" height="52" viewBox="0 0 60 52" fill="none" stroke="#fff" strokeWidth="4.500">
                  <path d="M2.500 8a5.500 5.500 0 0 1 5.500-5.500H19L27 13H52a5.500 5.500 0 0 1 5.500 5.500V44a5.500 5.500 0 0 1-5.500 5.500H8a5.500 5.500 0 0 1-5.500-5.500Z" />
                  <path d="M20 3H46Q51 3 51 9V13H27Z" fill="#fff" stroke="none" />
                </svg>
              </OpenButton>
              <ToolBar>
                {tools.map(([name, icon]) => (
                  <ToolButton key={name} aria-label={name}>
                    {icon}
                  </ToolButton>
                ))}
              </ToolBar>
              <ObjectPanel>
                <ObjectToggle>
                  <Chevron dir="up" color={c.icon} />
                  Object list
                </ObjectToggle>
                <ObjectName>
                  <svg width="32" height="32" viewBox="0 0 32 32" fill="#c4c4c4">
                    <path d="M0 28.500H32V32H0ZM7 25V20L27 0L32 5L12 25Z" />
                  </svg>
                  All_flats_PETG_11h40
                </ObjectName>
                <div>445.4 x 408.9 x 3.0 mm</div>
              </ObjectPanel>
            </ToolColumn>

            <ViewPanel>
              <ViewIcons>
                {viewIcons.map(([name, icon]) => (
                  <ViewIconButton key={name} aria-label={name}>
                    {icon}
                  </ViewIconButton>
                ))}
              </ViewIcons>
              <XRayRow>
                <TickBox id="xray" type="checkbox" $size={45} />
                <label htmlFor="xray">X-Ray view</label>
                <button aria-label="View options">
                  <Chevron />
                </button>
              </XRayRow>
              <LegendRow>
                Overhang
                <Swatch $fill="#ff0000" />
              </LegendRow>
              <LegendRow>
                Outside buildvolume
                <Swatch $fill="linear-gradient(135deg, #7d7d7d 50%, #acab7e 50%)" />
              </LegendRow>
            </ViewPanel>
          </Viewport>

          <SideColumn>
            <SettingsPanel>
              <ProfileRow>
                <ProfileButton>
                  <span>
                    Draft Quality<em> - 0.32mm</em>
                  </span>
                  <svg width="30" height="28" viewBox="0 0 30 28" fill="#858585">
                    <path d="M15 0L19 10H30L21 16.500L24.500 28L15 21L5.500 28L9 16.500L0 10H11Z" />
                  </svg>
                  <Chevron />
                </ProfileButton>
                <CustomToggle>
                  <Switch type="checkbox" defaultChecked />
                  Custom
                </CustomToggle>
                <PanelButton aria-label="Detach panel">
                  <svg width="26" height="26" viewBox="0 0 26 26">
                    <path d="M0 0H26V26H0Z" fill="#c8c8c8" />
                    <path d="M12 4H22V14L18.500 10.500L12.500 15.500L11 14L15.500 7.500Z" fill={c.panel} />
                  </svg>
                </PanelButton>
                <PanelButton aria-label="Close panel">
                  <svg width="18" height="18" viewBox="0 0 18 18" stroke="#c8c8c8" strokeWidth="2">
                    <path d="M1 1L17 17M17 1L1 17" />
                  </svg>
                </PanelButton>
              </ProfileRow>

              <ExtruderTabs>
                <ExtruderTab>
                  <svg width="88" height="90" viewBox="0 0 88 90">
                    <circle cx="44" cy="45" r="43" fill="#cdcdcd" />
                    <path d="M1 45H8V86H1Z" fill="#cdcdcd" />
                    <circle cx="44" cy="45" r="36" fill="#bad3d1" />
                    <circle cx="44" cy="45" r="25" fill={c.panel} />
                    <text x="44" y="55" textAnchor="middle" fontSize="27" fontWeight="700" fill="#e4e4e4">
                      1
                    </text>
                  </svg>
                  <span>
                    MatterHackers HG-Silver PETG
                    <strong>0.8mm Nozzle</strong>
                  </span>
                </ExtruderTab>
                <TabsMore aria-label="Show configurations">
                  <Chevron color="#9a9c9d" />
                </TabsMore>
              </ExtruderTabs>

              <HardwareGrid>
                <label htmlFor="material">Material</label>
                <SelectWrap>
                  <SelectBox id="material" $h={74}>
                    <option>HG-Silver PETG</option>
                  </SelectBox>
                  <Chevron />
                </SelectWrap>
                <label htmlFor="nozzle">Nozzle Size</label>
                <SelectWrap>
                  <SelectBox id="nozzle" $h={74}>
                    <option>0.8mm Nozzle</option>
                  </SelectBox>
                  <Chevron />
                </SelectWrap>
              </HardwareGrid>

              <SearchRow>
                <SearchField>
                  <svg width="38" height="38" viewBox="0 0 38 38" fill="none" stroke="#cfcfcf" strokeWidth="3.500">
                    <circle cx="24" cy="14" r="12" />
                    <path d="M15.500 22.500L1.500 36.500" />
                  </svg>
                  <input placeholder="Search settings" aria-label="Search settings" />
                </SearchField>
                <button aria-label="Setting visibility">
                  <svg width="46" height="40" viewBox="0 0 46 40" fill="#cfcfcf">
                    <path d="M0 0H46V5H0ZM0 17.500H46V22.500H0ZM0 35H46V40H0Z" />
                  </svg>
                </button>
              </SearchRow>

              <ListArea>
                <SettingsList>
                  {groups.map((g) => (
                    <React.Fragment key={g.title}>
                      <Category aria-expanded={!!g.settings}>
                        <CategoryIcon>{g.icon}</CategoryIcon>
                        {g.title}
                        <CategoryMark>
                          <Chevron dir={g.settings ? "down" : "left"} />
                        </CategoryMark>
                      </Category>
                      {g.settings?.map((s) => (
                        <Setting key={s.name} s={s} />
                      ))}
                    </React.Fragment>
                  ))}
                </SettingsList>
                <ScrollThumb />
              </ListArea>
            </SettingsPanel>

            <ActionPanel>
              <ScriptButton aria-label="Post-processing scripts">
                <svg width="28" height="20" viewBox="0 0 28 20" fill="none" stroke="#fff" strokeWidth="2.800">
                  <path d="M8 3L2 10L8 17M20 3L26 10L20 17M16 0L12 20" />
                </svg>
                <Badge>1</Badge>
              </ScriptButton>
              <SliceButton>Slice</SliceButton>
            </ActionPanel>
          </SideColumn>
        </Workspace>
      </Main>
    </Window>
  );
}
